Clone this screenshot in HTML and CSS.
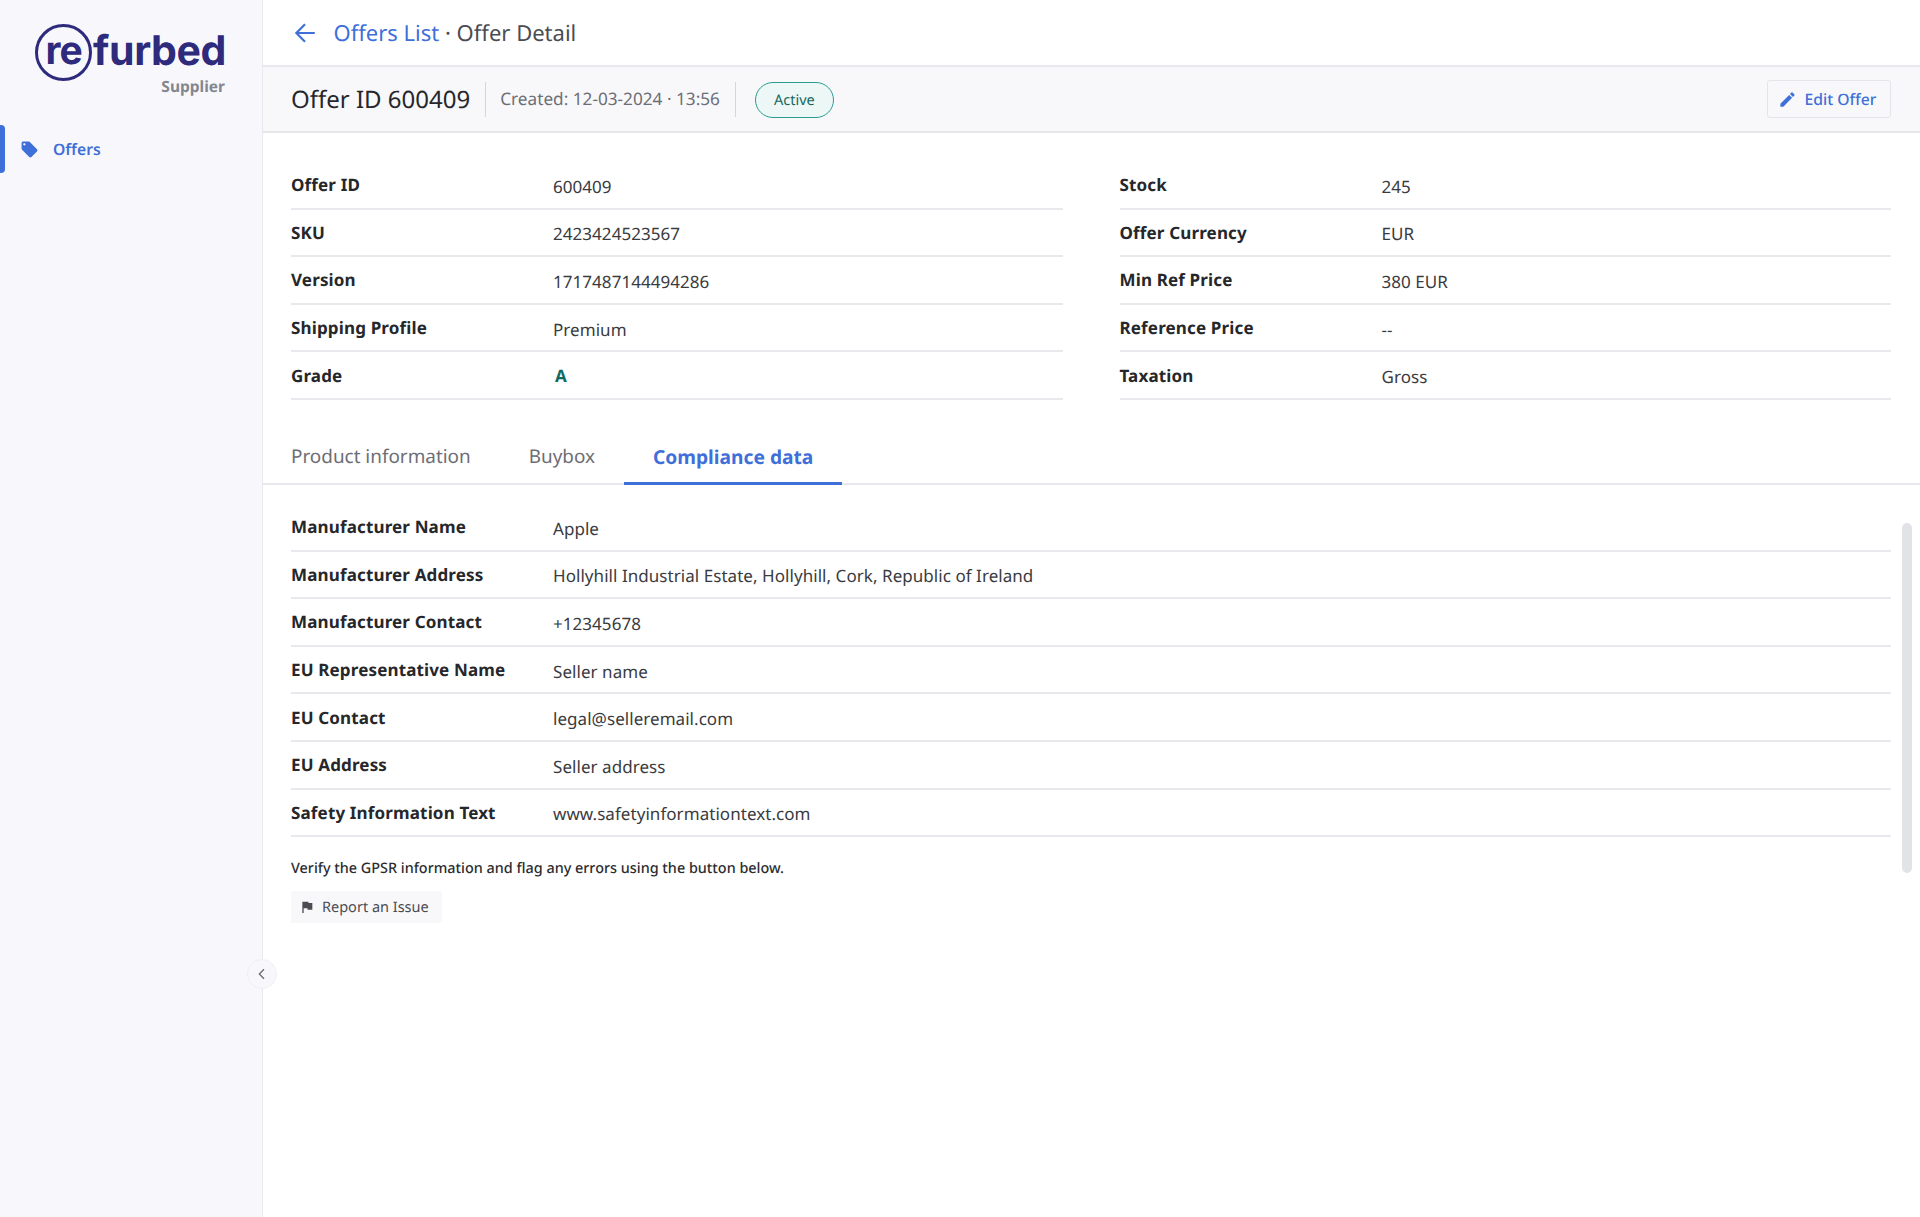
FILE: index.html
```html
<!DOCTYPE html>
<html lang="en">
<head>
<meta charset="utf-8">
<title>Offer Detail</title>
<link rel="stylesheet" href="styles.css">
</head>
<body>
<div class="app">
  <aside class="sidebar">
    <div class="brand">
      <div class="logo"><span class="logo-re">re</span><span class="logo-rest">furbed</span></div>
      <div class="brand-sub">Supplier</div>
    </div>
    <nav class="nav">
      <a class="nav-item">
        <span class="nav-marker"></span>
        <svg class="nav-icon" viewBox="0 0 24 24"><path d="M21.41 11.58l-9-9C12.05 2.22 11.55 2 11 2H4c-1.1 0-2 .9-2 2v7c0 .55.22 1.05.59 1.42l9 9c.36.36.86.58 1.41.58s1.05-.22 1.41-.59l7-7c.37-.36.59-.86.59-1.41s-.23-1.06-.59-1.42zM5.5 7C4.67 7 4 6.33 4 5.5S4.67 4 5.5 4 7 4.67 7 5.5 6.33 7 5.5 7z"/></svg>
        <span>Offers</span>
      </a>
    </nav>
    <button class="collapse" aria-label="Collapse">
      <svg viewBox="0 0 24 24"><path d="M15 5l-7 7 7 7"/></svg>
    </button>
  </aside>
  <main class="main">
    <header class="crumbs">
      <svg class="back" viewBox="0 0 24 24"><path d="M21 12H4M12 4l-8 8 8 8"/></svg>
      <span class="crumb-link">Offers List</span><span class="crumb-rest">&nbsp;· Offer Detail</span>
    </header>
    <section class="offer-bar">
      <h1 class="offer-title">Offer ID 600409</h1>
      <span class="offer-created">Created: 12-03-2024 · 13:56</span>
      <span class="offer-status"><span class="badge">Active</span></span>
      <button class="edit">
        <svg viewBox="0 0 24 24"><path d="M3 17.25V21h3.75L17.81 9.94l-3.75-3.75L3 17.25zM20.71 7.04c.39-.39.39-1.02 0-1.41l-2.34-2.34a.996.996 0 0 0-1.41 0l-1.83 1.83 3.75 3.75 1.83-1.83z"/></svg>
        <span>Edit Offer</span>
      </button>
    </section>
    <section class="summary">
      <dl class="list">
        <div class="row"><dt>Offer ID</dt><dd>600409</dd></div>
        <div class="row"><dt>SKU</dt><dd>2423424523567</dd></div>
        <div class="row"><dt>Version</dt><dd>1717487144494286</dd></div>
        <div class="row"><dt>Shipping Profile</dt><dd>Premium</dd></div>
        <div class="row"><dt>Grade</dt><dd class="grade">A</dd></div>
      </dl>
      <dl class="list">
        <div class="row"><dt>Stock</dt><dd>245</dd></div>
        <div class="row"><dt>Offer Currency</dt><dd>EUR</dd></div>
        <div class="row"><dt>Min Ref Price</dt><dd>380 EUR</dd></div>
        <div class="row"><dt>Reference Price</dt><dd>--</dd></div>
        <div class="row"><dt>Taxation</dt><dd>Gross</dd></div>
      </dl>
    </section>
    <nav class="tabs">
      <a class="tab">Product information</a>
      <a class="tab">Buybox</a>
      <a class="tab tab-active">Compliance data</a>
    </nav>
    <section class="compliance">
      <dl class="list">
        <div class="row"><dt>Manufacturer Name</dt><dd>Apple</dd></div>
        <div class="row"><dt>Manufacturer Address</dt><dd>Hollyhill Industrial Estate, Hollyhill, Cork, Republic of Ireland</dd></div>
        <div class="row"><dt>Manufacturer Contact</dt><dd>+12345678</dd></div>
        <div class="row"><dt>EU Representative Name</dt><dd>Seller name</dd></div>
        <div class="row"><dt>EU Contact</dt><dd>legal@selleremail.com</dd></div>
        <div class="row"><dt>EU Address</dt><dd>Seller address</dd></div>
        <div class="row"><dt>Safety Information Text</dt><dd>www.safetyinformationtext.com</dd></div>
      </dl>
      <p class="note">Verify the GPSR information and flag any errors using the button below.</p>
      <button class="report">
        <svg viewBox="0 0 24 24"><path d="M14.4 6L14 4H5v17h2v-7h5.6l.4 2h7V6z"/></svg>
        <span>Report an Issue</span>
      </button>
      <div class="scrollbar"></div>
    </section>
  </main>
</div>
</body>
</html>
```

FILE: styles.css
```css
* { box-sizing: border-box; }
html, body { margin: 0; height: 100%; }
body {
  font-family: "Noto Sans", "Open Sans", sans-serif;
  color: #2b2c30;
  background: #fff;
  text-rendering: geometricPrecision;
}
.app { display: flex; height: 1217px; overflow: hidden; }

.sidebar {
  position: relative;
  flex: 0 0 263px;
  background: #f8f8fc;
  border-right: 1px solid #e8e9ec;
}
.brand { padding: 23px 36px 0 0; display: flex; flex-direction: column; align-items: flex-end; }
.logo {
  display: flex;
  align-items: center;
  height: 58px;
  font-family: Inter, sans-serif;
  font-weight: 700;
  color: #2e2a7c;
  line-height: 1;
}
.logo-re {
  width: 57px; height: 57px;
  border: 3px solid #2e2a7c;
  border-radius: 50%;
  display: flex; align-items: center; justify-content: center;
  font-size: 39px;
  letter-spacing: -1px;
  padding-bottom: 4px;
}
.logo-rest { font-size: 41px; margin-left: 1px; padding-bottom: 4px; letter-spacing: -.4px; }
.brand-sub { font-size: 15.5px; font-weight: 700; color: #84868e; line-height: 20px; margin: -5px 1px 0 0; }
.nav { margin-top: 29px; }
.nav-item {
  display: flex; align-items: center; height: 48px;
  color: #3f6fd8;
  font-size: 15.7px; font-weight: 600;
}
.nav-marker { width: 5px; height: 48px; background: #3f6fd8; border-radius: 0 4px 4px 0; }
.nav-icon { width: 19px; height: 19px; fill: #3f6fd8; margin: 0 14px 0 15px; }
.collapse {
  position: absolute; right: -15px; top: 959px;
  width: 30px; height: 30px; padding: 0;
  border: 1px solid #f0f0f3; border-radius: 50%;
  background: #f8f8fc;
  display: flex; align-items: center; justify-content: center;
  z-index: 2;
}
.collapse svg { width: 16px; height: 16px; fill: none; stroke: #6b6d74; stroke-width: 2; }

.main { flex: 1; min-width: 0; display: flex; flex-direction: column; }

.crumbs {
  height: 67px; flex: none;
  display: flex; align-items: center;
  padding-left: 29px;
  font-size: 22px;
  border-bottom: 2px solid #e8e9ec;
}
.back { width: 26px; height: 26px; fill: none; stroke: #3f6fd8; stroke-width: 2; margin-right: 15.5px; }
.crumb-link { color: #3f6fd8; }
.crumb-rest { color: #4b4c52; }

.offer-bar {
  height: 66px; flex: none;
  display: flex; align-items: center;
  padding: 1px 29px 0 28px;
  background: #f8f8fb;
  border-bottom: 2px solid #e6e7ea;
}
.offer-title {
  margin: 0; font-size: 24px; font-weight: 400; color: #26272b;
  padding: 1px 15px 0 0; border-right: 1px solid #d5d6da;
  line-height: 34px;
}
.offer-created {
  font-size: 17.2px; color: #6d6e75;
  padding: 1px 15px 0 14px; border-right: 1px solid #d5d6da;
  line-height: 34px;
}
.offer-status { padding-left: 19px; display: flex; }
.badge {
  width: 79px; height: 36px;
  display: flex; align-items: center; justify-content: center;
  border: 1px solid #2a9d8f; border-radius: 18px;
  background: #edf7f6; color: #14695f;
  font-size: 14.5px;
}
.edit {
  margin-left: auto; margin-top: -1px;
  display: flex; align-items: center;
  width: 124px; height: 38px;
  padding: 0 0 0 10px;
  border: 1px solid #e4e5e9; border-radius: 3px;
  background: #f8f8fb; color: #3f6fd8;
  font: 500 15.7px "Noto Sans", sans-serif;
  text-rendering: geometricPrecision;
}
.edit svg { width: 19px; height: 19px; fill: #3f6fd8; margin-right: 7.5px; }

.summary {
  display: grid; grid-template-columns: 1fr 1fr; gap: 57px;
  padding: 29px 29px 0 28px;
  flex: none;
}
.list { margin: 0; }
.row {
  display: flex; align-items: center;
  height: 47.6px;
  border-bottom: 2px solid #e8e9ec;
  padding-top: 3px;
}
.row dt { flex: 0 0 262px; font-size: 17px; font-weight: 700; color: #26272b; margin-top: -3px; letter-spacing: .15px; }
.row dd { margin: 0; font-size: 17px; color: #3a3b40; letter-spacing: .05px; }
.row dd.grade { color: #14695f; font-weight: 700; padding-left: 2px; margin-top: -3px; }

.tabs {
  display: flex; flex: none;
  margin-top: 23px;
  height: 62px;
  border-bottom: 2px solid #e8e9ec;
}
.tab {
  padding: 8px 29px 0; height: 62px;
  display: flex; align-items: center;
  font-size: 18.9px; color: #6d6e75;
  border-bottom: 3px solid transparent;
}
.tab:first-child { padding-left: 28px; padding-right: 29px; }
.tab-active { color: #3f6fd8; font-weight: 700; font-size: 19.2px; border-bottom-color: #3f6fd8; }

.compliance { position: relative; flex: 1; padding: 19px 29px 0 28px; }
.note { margin: 22px 0 0; font-size: 14.4px; font-weight: 500; color: #2b2c30; line-height: 20px; }
.report {
  margin-top: 12px;
  display: flex; align-items: center;
  height: 32px; width: 151px; padding: 0 0 0 8px;
  border: 0; border-radius: 2px;
  background: #f8f8fb; color: #4b4c52;
  font: 400 14.5px "Noto Sans", sans-serif;
  text-rendering: geometricPrecision;
}
.report svg { width: 16px; height: 16px; fill: #4b4c52; margin-right: 7px; }
.scrollbar {
  position: absolute; right: 8px; top: 38px;
  width: 10px; height: 350px;
  background: #e2e3e6; border-radius: 5px;
}
```
